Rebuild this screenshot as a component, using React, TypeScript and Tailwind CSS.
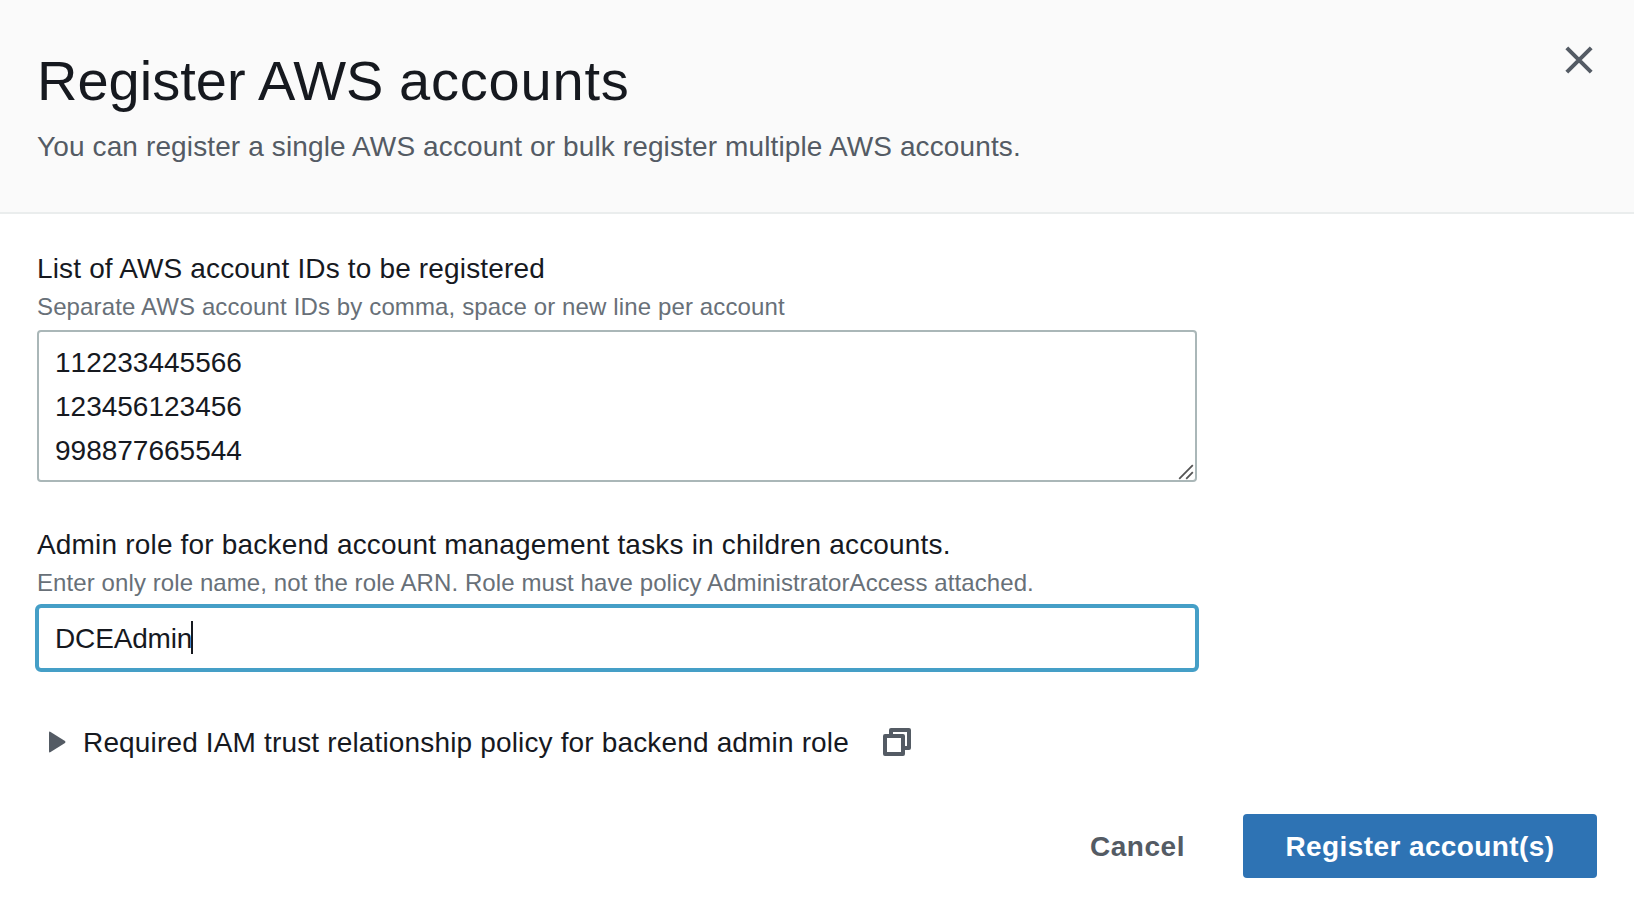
export default function App() {
  return (
    <div className="flex h-[914px] w-full flex-col bg-white text-[28px] text-[#16191f] [font-family:'Liberation_Sans',Arial,sans-serif]">
      <header className="flex h-[214px] items-start justify-between border-b-2 border-[#eaeded] bg-[#fafafa] pt-[49px] pr-[41px] pl-[37px]">
        <div className="flex flex-col gap-3 whitespace-nowrap">
          <h1 className="text-[56px] leading-[64px]">
            Register AWS <span className="tracking-[0.8px]">accounts</span>
          </h1>
          <p className="leading-[44px] tracking-[0.125px] text-[#545b64]">
            <span>You can register a single AWS account or bulk register multiple AWS accounts.</span>
          </p>
        </div>
        <button aria-label="Close" className="-mt-[7px] -mr-1">
          <svg className="block size-9" viewBox="0 0 36 36" fill="none" stroke="#545b64" strokeWidth="4">
            <path d="M5.8 5.8 30.2 30.2M30.2 5.8 5.8 30.2" />
          </svg>
        </button>
      </header>

      <main className="flex flex-col items-start pt-[37px] pl-[37px] whitespace-nowrap">
        <label className="leading-9 tracking-[0.156px]">
          <span>List of AWS account IDs to be registered</span>
        </label>
        <p className="mt-0.5 text-2xl leading-9 tracking-[0.13px] text-[#687078]">
          <span>Separate AWS account IDs by comma, space or new line per account</span>
        </p>
        <div className="mt-[5px] flex h-[152px] w-[1160px] items-end justify-between rounded-[4px] border-2 border-[#aab7b8] pl-4">
          <div className="flex h-full flex-col pt-[9px] leading-[44px] [font-kerning:none]">
            <span>112233445566</span>
            <span>123456123456</span>
            <span>998877665544</span>
          </div>
          <svg className="mr-px block size-4" viewBox="0 0 16 16" stroke="#545454" strokeWidth="1.8" fill="none">
            <path d="M1.2 14.8 14.8 1.2M8.2 14.8 14.8 8.2" />
          </svg>
        </div>

        <label className="mt-[45px] leading-9 tracking-[0.182px]">
          <span>Admin role for backend account management tasks in children accounts.</span>
        </label>
        <p className="mt-0.5 text-2xl leading-9 tracking-[0.092px] text-[#687078]">
          <span>Enter only role name, not the role ARN. Role must have policy AdministratorAccess attached.</span>
        </p>
        <div className="mt-[3px] -ml-0.5 flex h-[68px] w-[1164px] items-center rounded-[6px] border-4 border-[#459fc7] pl-4">
          <span className="pt-0.5 leading-[44px] tracking-[-0.15px]">DCEAdmin</span>
          <span className="-ml-px mb-0.5 h-[33px] w-0.5 bg-[#16191f]" />
        </div>

        <div className="mt-12 ml-3 flex h-11 items-center">
          <svg className="block h-[22px] w-[17px]" viewBox="0 0 17 22" fill="#545b64">
            <path d="M0 1.8Q0 0 1.6.9L16 10Q17 11 16 12L1.6 21.1Q0 22 0 20.2Z" />
          </svg>
          <span className="ml-[17px] pt-0.5 leading-[44px] tracking-[0.157px]">Required IAM trust relationship policy for backend admin role</span>
          <svg className="ml-[34px] block size-7" viewBox="0 0 28 28" fill="none" stroke="#545b64" strokeWidth="4" strokeLinejoin="round">
            <path d="M8 8V2H26V20H20" />
            <path d="M2 8H20V26H2Z" />
          </svg>
        </div>
      </main>

      <footer className="mt-[50px] flex items-center justify-end pr-[37px] font-bold whitespace-nowrap">
        <button className="mr-[58px] pt-0.5 leading-[44px] tracking-[0.55px] text-[#545b64]">
          <span>Cancel</span>
        </button>
        <button className="h-16 w-[354px] rounded-[4px] bg-[#2e73b4] pt-0.5 tracking-[0.4px] text-white">
          <span>Register account(s)</span>
        </button>
      </footer>
    </div>
  );
}
